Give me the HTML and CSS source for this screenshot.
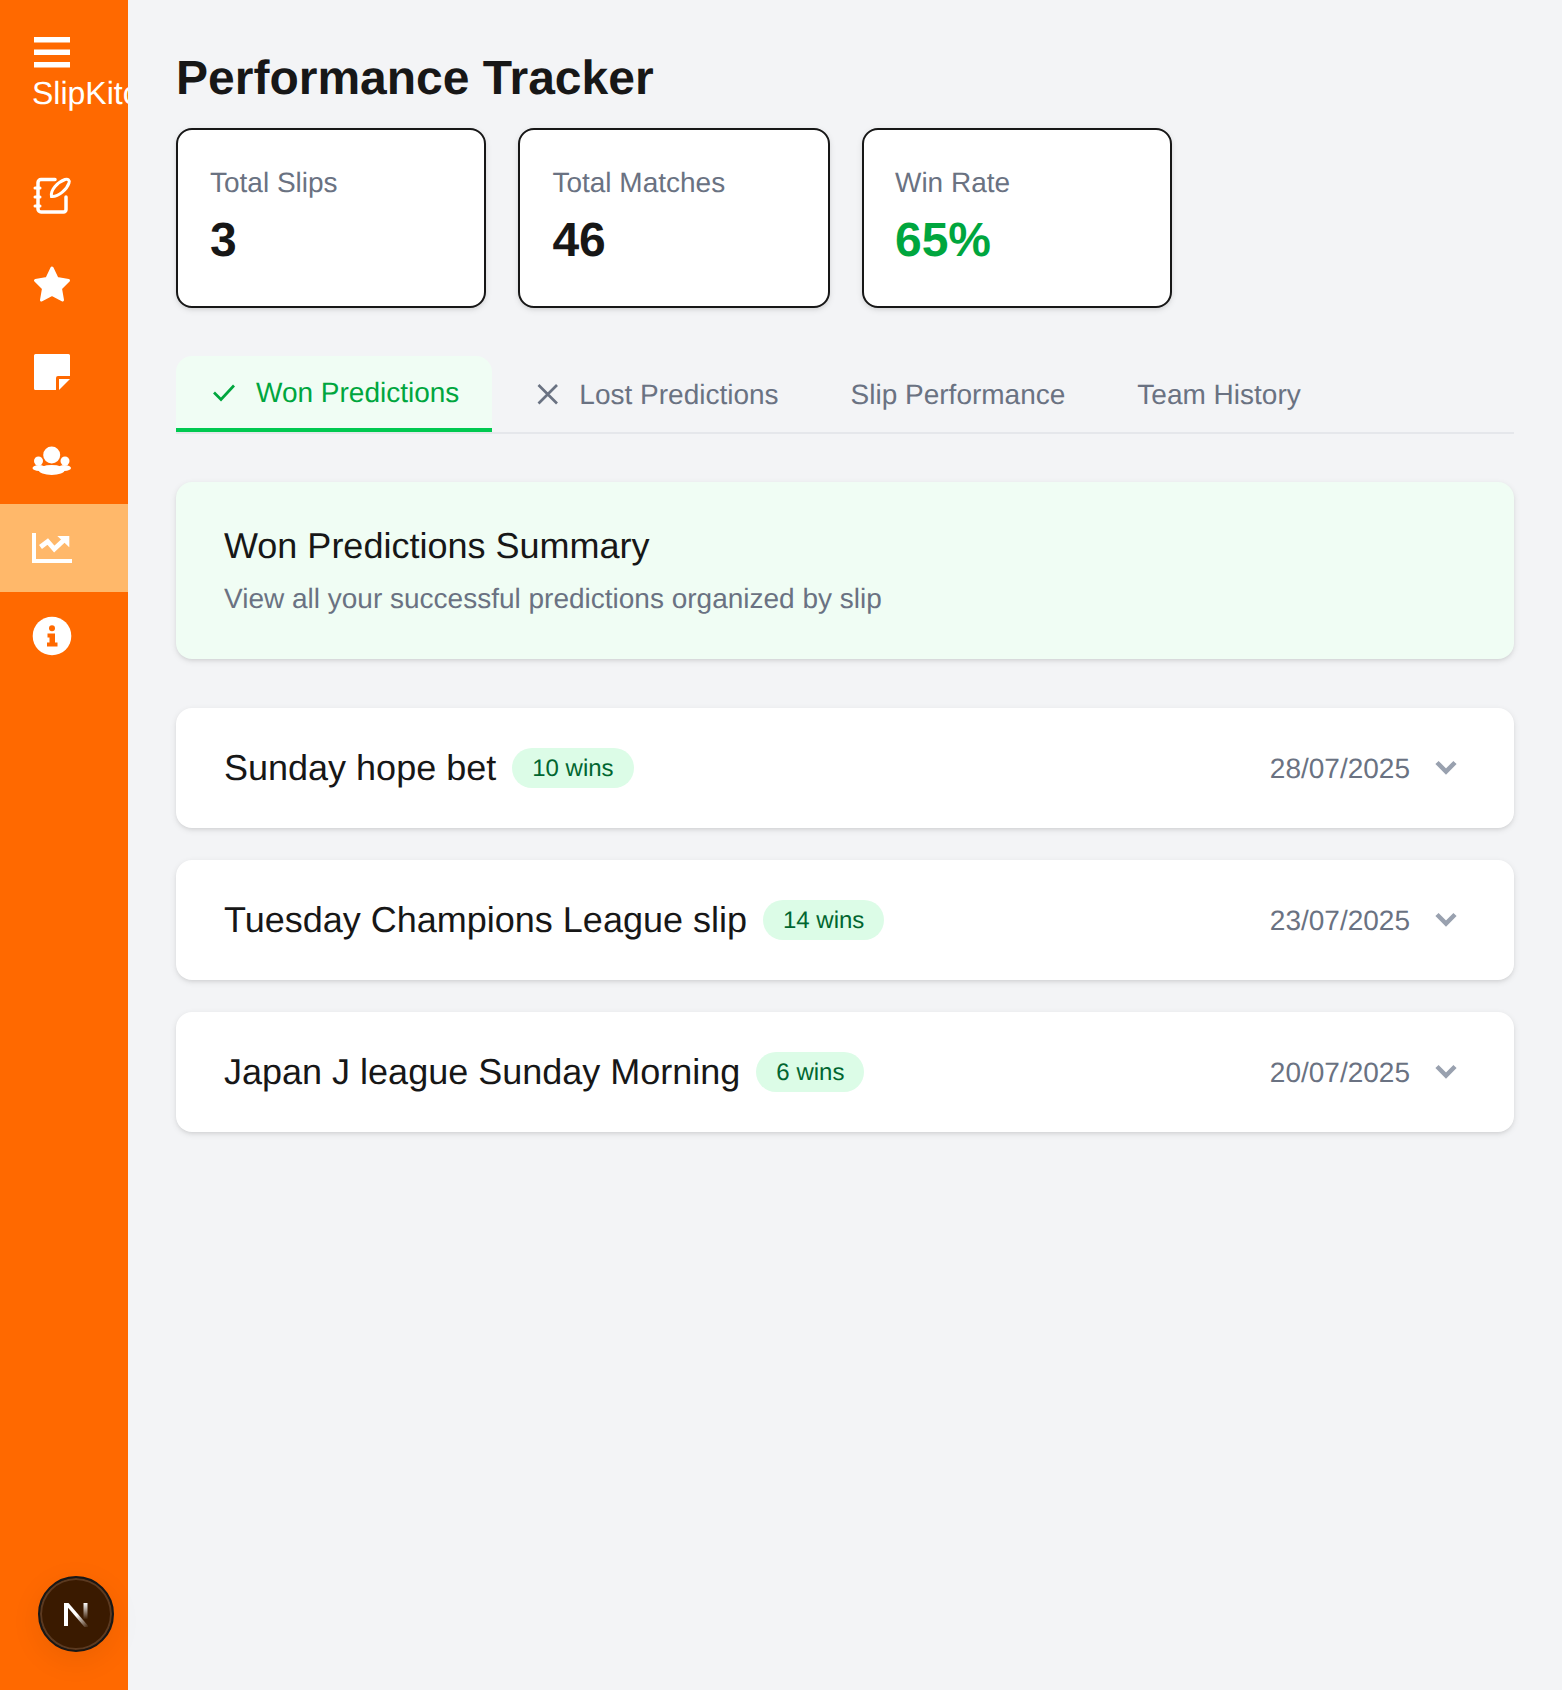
FILE: index.html
```html
<!DOCTYPE html>
<html lang="en">
<head>
    <meta charset="UTF-8">
    <meta name="viewport" content="width=device-width, initial-scale=1.0">
    <title>Performance Tracker</title>
    <link rel="stylesheet" href="styles.css">
</head>
<body>
    <!-- Sidebar -->
    <aside class="sidebar">
        <div class="brand">
            <svg class="menu-icon" viewBox="0 0 36 31" fill="#fff">
                <rect x="0" y="0" width="36" height="5.5"/>
                <rect x="0" y="12.5" width="36" height="5.5"/>
                <rect x="0" y="25" width="36" height="5.5"/>
            </svg>
            <span class="brand-name">SlipKitc</span>
        </div>
        <nav class="nav">
            <a class="nav-item">
                <svg viewBox="0 0 40 40" fill="none" stroke="#fff" stroke-width="3.5" stroke-linecap="round">
                    <path d="M23 3.500H9a3 3 0 0 0-3 3V33a3 3 0 0 0 3 3h22.500a2.500 2.500 0 0 0 2.500-2.500V21"/>
                    <path stroke-width="3" d="M3 12h5M3 21h5M3 30h5"/>
                    <path stroke-width="3" d="M19.500 20.500C18 14 26 6 33 3.500c3-1 5 1 4 3.500C35 13 27 21 19.500 20.500z"/>
                </svg>
            </a>
            <a class="nav-item">
                <svg viewBox="0 0 40 40" fill="#fff" stroke="#fff" stroke-width="3" stroke-linejoin="round">
                    <polygon points="20,4 25,14.500 36.500,16.500 28.500,24.500 30.500,36 20,30.500 9.500,36 11.500,24.500 3.500,16.500 15,14.500"/>
                </svg>
            </a>
            <a class="nav-item">
                <svg viewBox="0 0 40 40" fill="#fff">
                    <path d="M3.500 2h33A1.500 1.500 0 0 1 38 3.500V24H26a2 2 0 0 0-2 2v12H3.500A1.500 1.500 0 0 1 2 36.500v-33A1.500 1.500 0 0 1 3.500 2z"/>
                    <polygon points="27,27 38,27 27,38"/>
                </svg>
            </a>
            <a class="nav-item">
                <svg viewBox="0 0 40 40" fill="#fff">
                    <circle cx="19.700" cy="15" r="8.500"/>
                    <circle cx="6.500" cy="21" r="4.500"/>
                    <circle cx="33" cy="21" r="4.500"/>
                    <ellipse cx="7" cy="28" rx="6.500" ry="3"/>
                    <ellipse cx="32.500" cy="28" rx="6.500" ry="3"/>
                    <ellipse cx="19.700" cy="30" rx="13" ry="5"/>
                </svg>
            </a>
            <a class="nav-item active">
                <svg viewBox="0 0 40 40" fill="#fff">
                    <path d="M0 5h4v26h36v4H0z"/>
                    <polyline points="8.500,19 15.700,13.500 22.300,21 32,12" fill="none" stroke="#fff" stroke-width="4.800"/>
                    <polygon points="25.300,8 37.300,8 37.300,19.300"/>
                </svg>
            </a>
            <a class="nav-item">
                <svg viewBox="0 0 40 40">
                    <circle cx="20" cy="20" r="19.300" fill="#fff"/>
                    <circle cx="20" cy="12.300" r="3" fill="#ff6900"/>
                    <path fill="#ff6900" d="M15.500 17.500h7.500v9h2.500v4h-10.500v-4h2.500v-5h-2z"/>
                </svg>
            </a>
        </nav>
    </aside>

    <main class="main">
        <h1 class="page-title">Performance Tracker</h1>

        <div class="stats">
            <div class="stat-card">
                <div class="stat-label">Total Slips</div>
                <div class="stat-value">3</div>
            </div>
            <div class="stat-card">
                <div class="stat-label">Total Matches</div>
                <div class="stat-value">46</div>
            </div>
            <div class="stat-card">
                <div class="stat-label">Win Rate</div>
                <div class="stat-value green">65%</div>
            </div>
        </div>

        <div class="tabs">
            <button class="tab active">
                <svg viewBox="0 0 32 32" fill="none" stroke="#00a63e" stroke-width="2.700">
                    <path d="M6 16.500l7 7L26 9.500"/>
                </svg>
                Won Predictions
            </button>
            <button class="tab">
                <svg viewBox="0 0 32 32" fill="none" stroke="#6a7282" stroke-width="2.700">
                    <path d="M7.500 7l18.500 18.500M26 7L7.500 25.500"/>
                </svg>
                Lost Predictions
            </button>
            <button class="tab">Slip Performance</button>
            <button class="tab">Team History</button>
        </div>

        <section class="summary">
            <h2>Won Predictions Summary</h2>
            <p>View all your successful predictions organized by slip</p>
        </section>

        <div class="slip-list">
            <div class="slip-row">
                <div class="slip-left">
                    <h3>Sunday hope bet</h3>
                    <span class="pill">10 wins</span>
                </div>
                <div class="slip-right">
                    <span class="slip-date">28/07/2025</span>
                    <svg class="chevron" viewBox="0 0 40 40" fill="none" stroke="#99a1af" stroke-width="4.500"><path d="M11 14.500l9 9 9-9"/></svg>
                </div>
            </div>
            <div class="slip-row">
                <div class="slip-left">
                    <h3>Tuesday Champions League slip</h3>
                    <span class="pill">14 wins</span>
                </div>
                <div class="slip-right">
                    <span class="slip-date">23/07/2025</span>
                    <svg class="chevron" viewBox="0 0 40 40" fill="none" stroke="#99a1af" stroke-width="4.500"><path d="M11 14.500l9 9 9-9"/></svg>
                </div>
            </div>
            <div class="slip-row">
                <div class="slip-left">
                    <h3>Japan J league Sunday Morning</h3>
                    <span class="pill">6 wins</span>
                </div>
                <div class="slip-right">
                    <span class="slip-date">20/07/2025</span>
                    <svg class="chevron" viewBox="0 0 40 40" fill="none" stroke="#99a1af" stroke-width="4.500"><path d="M11 14.500l9 9 9-9"/></svg>
                </div>
            </div>
        </div>
    </main>

    <!-- dev indicator badge -->
    <div class="dev-badge">
        <svg viewBox="0 0 24 24">
            <defs>
                <linearGradient id="fadeDiag" x1="0" y1="0" x2="1" y2="1">
                    <stop offset="0.5" stop-color="#fff"/>
                    <stop offset="1" stop-color="#fff" stop-opacity="0"/>
                </linearGradient>
                <linearGradient id="fadeRight" x1="0" y1="0" x2="0" y2="1">
                    <stop offset="0" stop-color="#fff"/>
                    <stop offset="0.75" stop-color="#fff" stop-opacity="0"/>
                </linearGradient>
            </defs>
            <rect x="0" y="0" width="4" height="23" fill="#fff"/>
            <polygon points="0,0 4.500,0 25,24 20.500,24" fill="url(#fadeDiag)"/>
            <rect x="19.500" y="0" width="4" height="22" fill="url(#fadeRight)"/>
        </svg>
    </div>
</body>
</html>
```

FILE: styles.css
```css
* {
    box-sizing: border-box;
}

body {
    margin: 0;
    min-height: 1690px;
    display: flex;
    font-family: "Liberation Sans", Arial, sans-serif;
    background: #f3f4f6;
    color: #171717;
    text-rendering: geometricPrecision;
}

/* sidebar */
.sidebar {
    width: 128px;
    flex-shrink: 0;
    background: #ff6900;
    color: #fff;
    overflow: hidden;
}

.brand {
    padding: 37px 0 0 32px;
    height: 152px;
}

.menu-icon {
    display: block;
    width: 36px;
    height: 31px;
    margin-left: 2px;
}

.brand-name {
    display: block;
    font-size: 32px;
    line-height: 36px;
    margin-top: 7px;
    white-space: nowrap;
}

.nav-item {
    display: flex;
    align-items: center;
    height: 88px;
    padding-left: 32px;
}

.nav-item svg {
    width: 40px;
    height: 40px;
}

.nav-item.active {
    background: #ffb86a;
}

/* main content */
.main {
    flex: 1;
    padding: 48px;
    min-width: 0;
}

.page-title {
    margin: 0 0 18px;
    font-size: 48px;
    line-height: 62px;
    font-weight: 700;
}

.stats {
    display: grid;
    grid-template-columns: 310.4px 311.2px 310px;
    gap: 32px;
    margin-bottom: 48px;
}

.stat-card {
    padding: 32px 32px 29px;
    background: #fff;
    border: 2px solid #171717;
    border-radius: 16px;
    box-shadow: 0 2px 6px rgba(0, 0, 0, 0.1), 0 2px 4px -2px rgba(0, 0, 0, 0.1);
}

.stat-card:last-child {
    padding-left: 31.4px;
}

.stat-label {
    font-size: 28px;
    line-height: 42px;
    color: #6a7282;
}

.stat-value {
    margin-top: 1px;
    font-size: 48px;
    line-height: 72px;
    font-weight: 700;
}

.green {
    color: #00a63e;
}

/* tabs */
.tabs {
    display: flex;
    align-items: center;
    gap: 8px;
    border-bottom: 2px solid #e5e7eb;
    margin-bottom: 48px;
}

.tab {
    display: flex;
    align-items: center;
    gap: 16px;
    padding: 17px 32px 15px;
    border: none;
    background: none;
    font: inherit;
    font-size: 28px;
    line-height: 40px;
    color: #6a7282;
    text-rendering: geometricPrecision;
}

.tab svg {
    width: 32px;
    height: 32px;
    margin-top: -2px;
}

.tab.active {
    padding-right: 33px;
    margin-right: -1px;
    color: #00a63e;
    background: #f0fdf4;
    border-bottom: 4px solid #00c950;
    border-radius: 16px 16px 0 0;
}

/* summary box */
.summary {
    padding: 40px 48px;
    background: #f0fdf4;
    border-radius: 16px;
    box-shadow: 0 2px 6px rgba(0, 0, 0, 0.1), 0 2px 4px -2px rgba(0, 0, 0, 0.1);
    margin-bottom: 49px;
}

.summary h2 {
    margin: 0 0 9px;
    font-size: 36px;
    line-height: 48px;
    font-weight: 400;
}

.summary p {
    margin: 0;
    font-size: 28px;
    line-height: 40px;
    color: #6a7282;
}

/* slip rows */
.slip-list {
    display: flex;
    flex-direction: column;
    gap: 32px;
}

.slip-row {
    display: flex;
    justify-content: space-between;
    align-items: center;
    height: 120px;
    padding: 0 48px;
    background: #fff;
    border-radius: 16px;
    box-shadow: 0 2px 6px rgba(0, 0, 0, 0.1), 0 2px 4px -2px rgba(0, 0, 0, 0.1);
}

.slip-left,
.slip-right {
    display: flex;
    align-items: center;
    gap: 16px;
}

.slip-left h3 {
    margin: 0;
    font-size: 36px;
    line-height: 48px;
    font-weight: 400;
}

.pill {
    padding: 2px 20px 0;
    font-size: 24px;
    line-height: 38px;
    color: #016630;
    background: #dcfce7;
    border-radius: 20px;
}

.slip-date {
    padding-top: 2px;
    font-size: 28px;
    color: #6a7282;
}

.chevron {
    width: 40px;
    height: 40px;
}

/* floating badge, sits over the sidebar */
.dev-badge {
    position: fixed;
    left: 38px;
    bottom: 38px;
    width: 76px;
    height: 76px;
    display: flex;
    align-items: center;
    justify-content: center;
    padding-top: 2px;
    border-radius: 50%;
    background: #3a1a00;
    border: 2px solid #171717;
    box-shadow: inset 0 0 0 2px #5c3a20, 0 8px 30px rgba(0, 0, 0, 0.08);
}

.dev-badge svg {
    width: 24px;
    height: 24px;
}
```
